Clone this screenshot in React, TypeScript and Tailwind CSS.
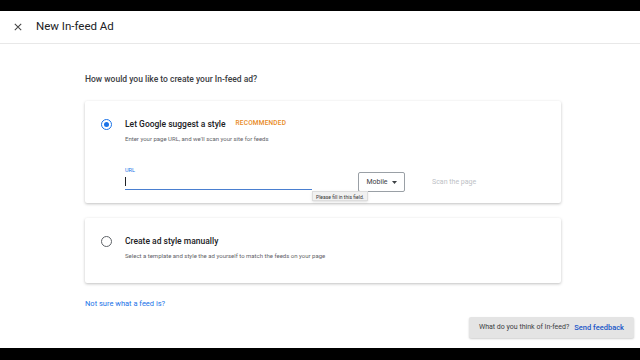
import React from 'react';

export default function App() {
  return (
    <div className="w-[640px] h-[360px] bg-black flex flex-col overflow-hidden" style={{ fontFamily: 'Roboto, "Liberation Sans", sans-serif' }}>
      {/* 顶部黑边 */}
      <div className="h-[11px] shrink-0" />

      <div className="flex-1 bg-white flex flex-col">
        {/* 标题栏 */}
        <div className="h-[33px] flex items-center border-b border-[#e8e8e8] shrink-0">
          <svg className="ml-[14px] w-[8px] h-[8px]" viewBox="0 0 10 10">
            <path d="M1 1L9 9M9 1L1 9" stroke="#444" strokeWidth="1.3" />
          </svg>
          <span className="ml-[14px] text-[11.5px] text-[#202124]">New In-feed Ad</span>
        </div>

        <div className="flex-1 relative">
          <div className="ml-[85px] w-[476px]">
            <div className="mt-[30px] h-[10px] leading-[10px] text-[8.5px] text-[#3c4043] font-medium">How would you like to create your In-feed ad?</div>

            {/* 卡片1 */}
            <div className="mt-[17px] h-[102px] bg-white shadow-[0_1px_3px_rgba(0,0,0,0.25)] rounded-[2px] pt-[17px]">
              <div className="flex items-center h-[12px] pl-[16px]">
                <div className="w-[11px] h-[11px] rounded-full border-[1.5px] border-[#1a73e8] flex items-center justify-center">
                  <div className="w-[5px] h-[5px] rounded-full bg-[#1a73e8]" />
                </div>
                <span className="ml-[13px] text-[8.5px] font-medium text-[#202124]">Let Google suggest a style</span>
                <span className="ml-[10px] text-[6.5px] font-medium tracking-[0.2px] text-[#e8891c]">RECOMMENDED</span>
              </div>
              <div className="pl-[40px] mt-[5px] h-[8px] leading-[8px] text-[6px] text-[#5f6368]">Enter your page URL, and we'll scan your site for feeds</div>

              <div className="flex items-start pl-[40px] mt-[23px]">
                <div className="w-[187px] relative">
                  <div className="h-[8px] leading-[8px] text-[5.5px] text-[#1a73e8]">URL</div>
                  <div className="h-[16px] border-b-[1.5px] border-[#4a7fd0] flex items-center">
                    <div className="w-[1px] h-[9px] bg-[#202124]" />
                  </div>
                  <div className="absolute left-[187px] top-[25px] px-[3px] h-[10px] leading-[10px] bg-[#f1f1f1] border border-[#ddd] text-[5px] text-[#333] whitespace-nowrap z-10 shadow-sm">
                    Please fill in this field.
                  </div>
                </div>
                <div className="ml-[46px] mt-[6px] h-[20px] w-[47px] border border-[#9aa0a6] rounded-[2px] flex items-center justify-center gap-[4px] text-[7px] text-[#3c4043]">
                  Mobile
                  <svg width="5" height="3" viewBox="0 0 5 3"><path d="M0 0H5L2.5 3Z" fill="#3c4043" /></svg>
                </div>
                <div className="ml-[27px] mt-[12px] h-[8px] leading-[8px] text-[7px] text-[#bdc1c6]">Scan the page</div>
              </div>
            </div>

            {/* 卡片2 */}
            <div className="mt-[15px] h-[65px] bg-white shadow-[0_1px_3px_rgba(0,0,0,0.25)] rounded-[2px] pt-[17px]">
              <div className="flex items-center h-[12px] pl-[16px]">
                <div className="w-[11px] h-[11px] rounded-full border-[1.5px] border-[#5f6368]" />
                <span className="ml-[13px] text-[8.5px] font-medium text-[#202124]">Create ad style manually</span>
              </div>
              <div className="pl-[40px] mt-[5px] h-[8px] leading-[8px] text-[6px] text-[#5f6368]">Select a template and style the ad yourself to match the feeds on your page</div>
            </div>

            <div className="mt-[16px] h-[10px] leading-[10px] text-[7.5px] text-[#1a73e8]">Not sure what a feed is?</div>
          </div>

          {/* 反馈 */}
          <div className="absolute right-[6px] bottom-[10px] h-[21px] w-[165px] bg-[#e4e4e4] rounded-[2px] flex items-center justify-center gap-[5px] text-[7px] shadow-[0_1px_2px_rgba(0,0,0,0.2)]">
            <span className="text-[#3c4043]">What do you think of In-feed?</span>
            <span className="text-[#1a56c8] font-medium text-[7.5px]">Send feedback</span>
          </div>
        </div>
      </div>

      {/* 底部黑边 */}
      <div className="h-[12px] shrink-0" />
    </div>
  );
}
